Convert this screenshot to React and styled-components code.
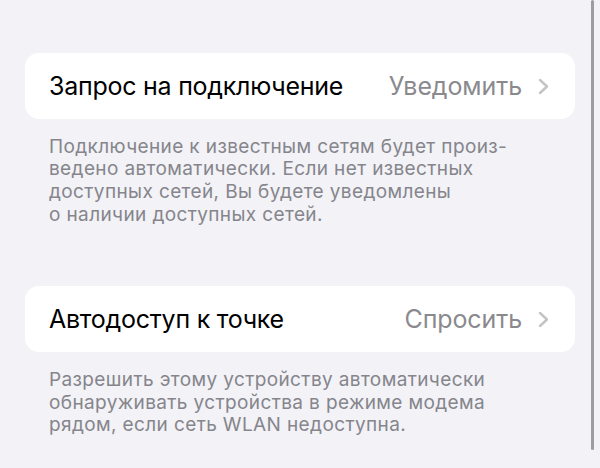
import React from "react"
import styled, { createGlobalStyle } from "styled-components"

const GlobalStyle = createGlobalStyle`
  html, body {
    margin: 0;
    padding: 0;
    background: #f2f2f7;
  }
  body {
    font-family: Inter, "Noto Sans", "Liberation Sans", sans-serif;
    -webkit-font-smoothing: antialiased;
  }
`

const Page = styled.div`
  position: relative;
  width: 600px;
  height: 468px;
  overflow: hidden;
  box-sizing: border-box;
  padding: 53px 25px 0 25px;
  display: flex;
  flex-direction: column;
  gap: 60px;
`

const Section = styled.section`
  display: flex;
  flex-direction: column;
`

const Card = styled.div`
  background: #ffffff;
  border-radius: 14px;
  height: 66px;
  display: flex;
  align-items: center;
  padding: 0 26px 0 24px;
`

const Title = styled.span`
  flex: 1;
  font-size: 25px;
  color: #000;
  letter-spacing: -0.25px;
`

const Value = styled.span`
  font-size: 25px;
  color: #8a8a8e;
  letter-spacing: -0.1px;
  margin-right: 16px;
`

const Chevron = styled.svg`
  width: 11px;
  height: 17px;
  flex: none;
`

const Footer = styled.p`
  margin: 0;
  padding: 16.5px 24px 0 24px;
  font-size: 19px;
  line-height: 22.7px;
  color: #85858b;
  letter-spacing: 0.38px;
  white-space: nowrap;
`

const ScrollBar = styled.div`
  position: absolute;
  top: 0;
  left: 591px;
  width: 3px;
  height: 450px;
  border-radius: 2px;
  background: #9c9ca1;
`

function Row({ title, value }) {
  return (
    <Card>
      <Title>{title}</Title>
      <Value>{value}</Value>
      <Chevron viewBox="0 0 11 17">
        <path
          d="M2 2l7 6.5L2 15"
          fill="none"
          stroke="#c4c4c8"
          strokeWidth="2.4"
          strokeLinecap="round"
          strokeLinejoin="round"
        />
      </Chevron>
    </Card>
  )
}

export default function App() {
  return (
    <>
      <GlobalStyle />
      <Page>
        <Section>
          <Row title="Запрос на подключение" value="Уведомить" />
          <Footer>
            Подключение к известным сетям будет произ-
            <br />
            ведено автоматически. Если нет известных
            <br />
            доступных сетей, Вы будете уведомлены
            <br />о наличии доступных сетей.
          </Footer>
        </Section>
        <Section>
          <Row title="Автодоступ к точке" value="Спросить" />
          <Footer>
            Разрешить этому устройству автоматически
            <br />
            обнаруживать устройства в режиме модема
            <br />
            рядом, если сеть WLAN недоступна.
          </Footer>
        </Section>
        <ScrollBar />
      </Page>
    </>
  )
}
